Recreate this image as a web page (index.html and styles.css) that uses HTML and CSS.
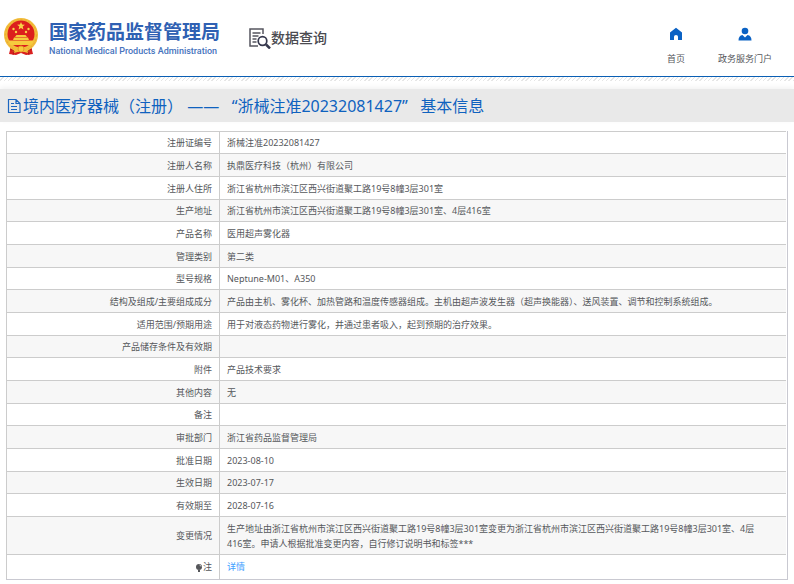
FILE: index.html
```html
<!DOCTYPE html>
<html lang="zh-CN">
<head>
<meta charset="utf-8">
<title>国家药品监督管理局 数据查询</title>
<link rel="stylesheet" href="styles.css">
</head>
<body>
<header class="header">
  <div class="brand">
    <svg class="emblem" viewBox="0 0 36 40" aria-hidden="true">
      <path d="M8 29 6 37l7 1 5-2 5 2 7-1-2-8z" fill="#d9201f"/>
      <circle cx="18" cy="18" r="17" fill="#f2bd3a"/>
      <circle cx="18" cy="18" r="15.5" fill="none" stroke="#eaa930" stroke-width="1" stroke-dasharray="2 2"/>
      <circle cx="18" cy="17" r="13.5" fill="#dc1f1d"/>
      <path d="m18 5 1.1 2.6 2.8.2-2.2 1.8.7 2.8-2.4-1.5-2.4 1.5.7-2.8-2.2-1.8 2.8-.2z" fill="#f8d347"/>
      <g fill="#f8d347"><circle cx="10.500" cy="12" r="1.200"/><circle cx="13" cy="15" r="1.200"/><circle cx="23" cy="15" r="1.200"/><circle cx="25.500" cy="12" r="1.200"/></g>
      <path d="M12 20l1.500-2h9l1.500 2zM10 23l1-2.500h14l1 2.500zM6 26v-2.500h24V26l-2 2H8z" fill="#f6cb3e"/>
      <path d="M9 33q3-4 9-2 6-2 9 2l-2 3-7-2-7 2z" fill="#f2bd3a"/>
      <circle cx="18" cy="32" r="3" fill="#f6cb3e" stroke="#e8962a"/>
      <path d="M7 32l4 2-1 4M29 32l-4 2 1 4" fill="none" stroke="#b81718"/>
    </svg>
    <div class="brand-text">
      <div class="brand-name">国家药品监督管理局</div>
      <div class="brand-en">National Medical Products Administration</div>
    </div>
    <div class="section">
      <svg class="section-icon" viewBox="0 0 22 22" fill="none" stroke="#55555f" aria-hidden="true">
        <path d="M14 7V2H1v17h8" stroke-width="1.500"/>
        <path d="M3.500 6h8M3.500 9h6M3.500 12h4M3.500 15h4" stroke-width="1.300"/>
        <circle cx="13.500" cy="14" r="4.300" stroke="#35374c" stroke-width="1.700"/>
        <path d="m17 17.500 4 4" stroke="#35374c" stroke-width="2.500"/>
      </svg>
      <span>数据查询</span>
    </div>
  </div>
  <nav class="nav">
    <a href="#home"><svg viewBox="0 0 14 14" aria-hidden="true"><path d="M7 .8 1 5.500V13h4V9.800q0-1.800 2-1.800t2 1.800V13h4V5.500z" fill="#0b62c4"/></svg>首页</a>
    <a href="#services"><svg viewBox="0 0 14 14" aria-hidden="true"><circle cx="7" cy="4" r="3.300" fill="#0b62c4"/><path d="M.5 13.500q0-5 4-5.500L7 10.500 9.500 8q4 .5 4 5.500z" fill="#0b62c4"/></svg>政务服务门户</a>
  </nav>
</header>
<div class="hatch"></div>
<main>
  <h1 class="title">
    <svg viewBox="0 0 14 16" fill="none" stroke="#1c66c0" stroke-width="1.200" aria-hidden="true"><path d="M1.500 1.500h7.500l4 4v9H1.500zM9 1.500v4h4M4 5.500h3M4 8.500h6M4 11.500h6"/></svg>
    <span>境内医疗器械（注册） ——&nbsp;&nbsp; “浙械注准20232081427”&nbsp;&nbsp; 基本信息</span>
  </h1>
  <div class="sheet">
    <table class="info">
      <tbody>
        <tr><th scope="row">注册证编号</th><td>浙械注准20232081427</td></tr>
        <tr><th scope="row">注册人名称</th><td>执鼎医疗科技（杭州）有限公司</td></tr>
        <tr><th scope="row">注册人住所</th><td>浙江省杭州市滨江区西兴街道聚工路19号8幢3层301室</td></tr>
        <tr><th scope="row">生产地址</th><td>浙江省杭州市滨江区西兴街道聚工路19号8幢3层301室、4层416室</td></tr>
        <tr><th scope="row">产品名称</th><td>医用超声雾化器</td></tr>
        <tr><th scope="row">管理类别</th><td>第二类</td></tr>
        <tr><th scope="row">型号规格</th><td>Neptune-M01、A350</td></tr>
        <tr><th scope="row">结构及组成/主要组成成分</th><td>产品由主机、雾化杯、加热管路和温度传感器组成。主机由超声波发生器（超声换能器）、送风装置、调节和控制系统组成。</td></tr>
        <tr><th scope="row">适用范围/预期用途</th><td>用于对液态药物进行雾化，并通过患者吸入，起到预期的治疗效果。</td></tr>
        <tr><th scope="row">产品储存条件及有效期</th><td></td></tr>
        <tr><th scope="row">附件</th><td>产品技术要求</td></tr>
        <tr><th scope="row">其他内容</th><td>无</td></tr>
        <tr><th scope="row">备注</th><td></td></tr>
        <tr><th scope="row">审批部门</th><td>浙江省药品监督管理局</td></tr>
        <tr><th scope="row">批准日期</th><td>2023-08-10</td></tr>
        <tr><th scope="row">生效日期</th><td>2023-07-17</td></tr>
        <tr><th scope="row">有效期至</th><td>2028-07-16</td></tr>
        <tr class="changes"><th scope="row">变更情况</th><td>生产地址由浙江省杭州市滨江区西兴街道聚工路19号8幢3层301室变更为浙江省杭州市滨江区西兴街道聚工路19号8幢3层301室、4层416室。申请人根据批准变更内容，自行修订说明书和标签***</td></tr>
        <tr class="note"><th scope="row"><svg viewBox="0 0 8 10" aria-hidden="true"><circle cx="4" cy="4" r="3" fill="#55565a"/><path d="M3 7h2v2H3z" fill="#55565a"/><path d="M4.500 2q1.300.3 1.500 1.500" fill="none" stroke="#ddd"/></svg>注</th><td><a href="#detail">详情</a></td></tr>
      </tbody>
    </table>
  </div>
</main>
</body>
</html>
```
FILE: styles.css
```css
* { box-sizing: border-box; }

body {
  margin: 0;
  background: #fff;
  color: #55575b;
  font-family: "Noto Sans", "Noto Sans CJK SC", sans-serif;
  font-size: 9px;
  line-height: 15px;
}

a { color: inherit; text-decoration: none; }

.header {
  display: flex;
  justify-content: space-between;
  align-items: flex-start;
  height: 77px;
  padding: 17px 22px 0 3px;
  border-bottom: 1px solid #0a5fb4;
}

.brand { display: flex; align-items: flex-start; }

.emblem { width: 36px; height: 40px; }

.brand-text { margin: 4px 0 0 10px; color: #2f61b3; white-space: nowrap; }

.brand-name { font-size: 19px; line-height: 22px; font-weight: 700; }

.brand-en {
  color: #4673bd;
  font-family: Roboto, "Liberation Sans", sans-serif;
  font-size: 9px;
  line-height: 16px;
  font-weight: 500;
}

.section {
  display: flex;
  align-items: center;
  margin: 10px 0 0 29px;
  color: #4a4a50;
  font-size: 14px;
  line-height: 22px;
  font-weight: 500;
  white-space: nowrap;
}

.section-icon { width: 22px; height: 22px; }

.nav { display: flex; gap: 33px; padding-top: 10px; }

.nav a {
  display: flex;
  flex-direction: column;
  align-items: center;
  gap: 10px;
  white-space: nowrap;
}

.nav svg { width: 14px; height: 14px; }

.hatch {
  height: 4px;
  background: repeating-linear-gradient(135deg, #fff 0 2px, #e6e6e6 2px 3px);
}

.title {
  display: flex;
  align-items: center;
  gap: 2px;
  margin: 8px 0 9px;
  padding: 0 7px;
  min-height: 33px;
  background: #e9e9e9;
  box-shadow: 0 -2px 5px #f3f3f3;
  color: #0f62bf;
  font-size: 16px;
  line-height: 24px;
  font-weight: 400;
}

.title svg { width: 14px; height: 16px; flex: none; }

.sheet {
  margin: 0 6px;
  padding-right: 1px;
  border-right: 1px solid #c9c9d1;
  border-bottom: 1px solid #c9c9d1;
}

.info { width: 100%; border-collapse: collapse; }

.info tr { height: 23px; }
.info tr:nth-child(3n+1) { height: 22px; }
.info tr:nth-child(even) { background: #f7f7f7; }
.info tr.changes { height: 38px; }
.info tr.note { height: 24px; }

.info th,
.info td {
  padding: 0 7px;
  border: 1px solid #ccc;
  border-right: 0;
  text-align: left;
  font-weight: 400;
}

.info th { width: 213px; text-align: right; }
.info td { padding-right: 20px; }
.info .note th,
.info .note td { border-bottom: 0; }

.note svg { width: 8px; height: 10px; vertical-align: middle; }
.info .note a { color: #409eff; }
```
